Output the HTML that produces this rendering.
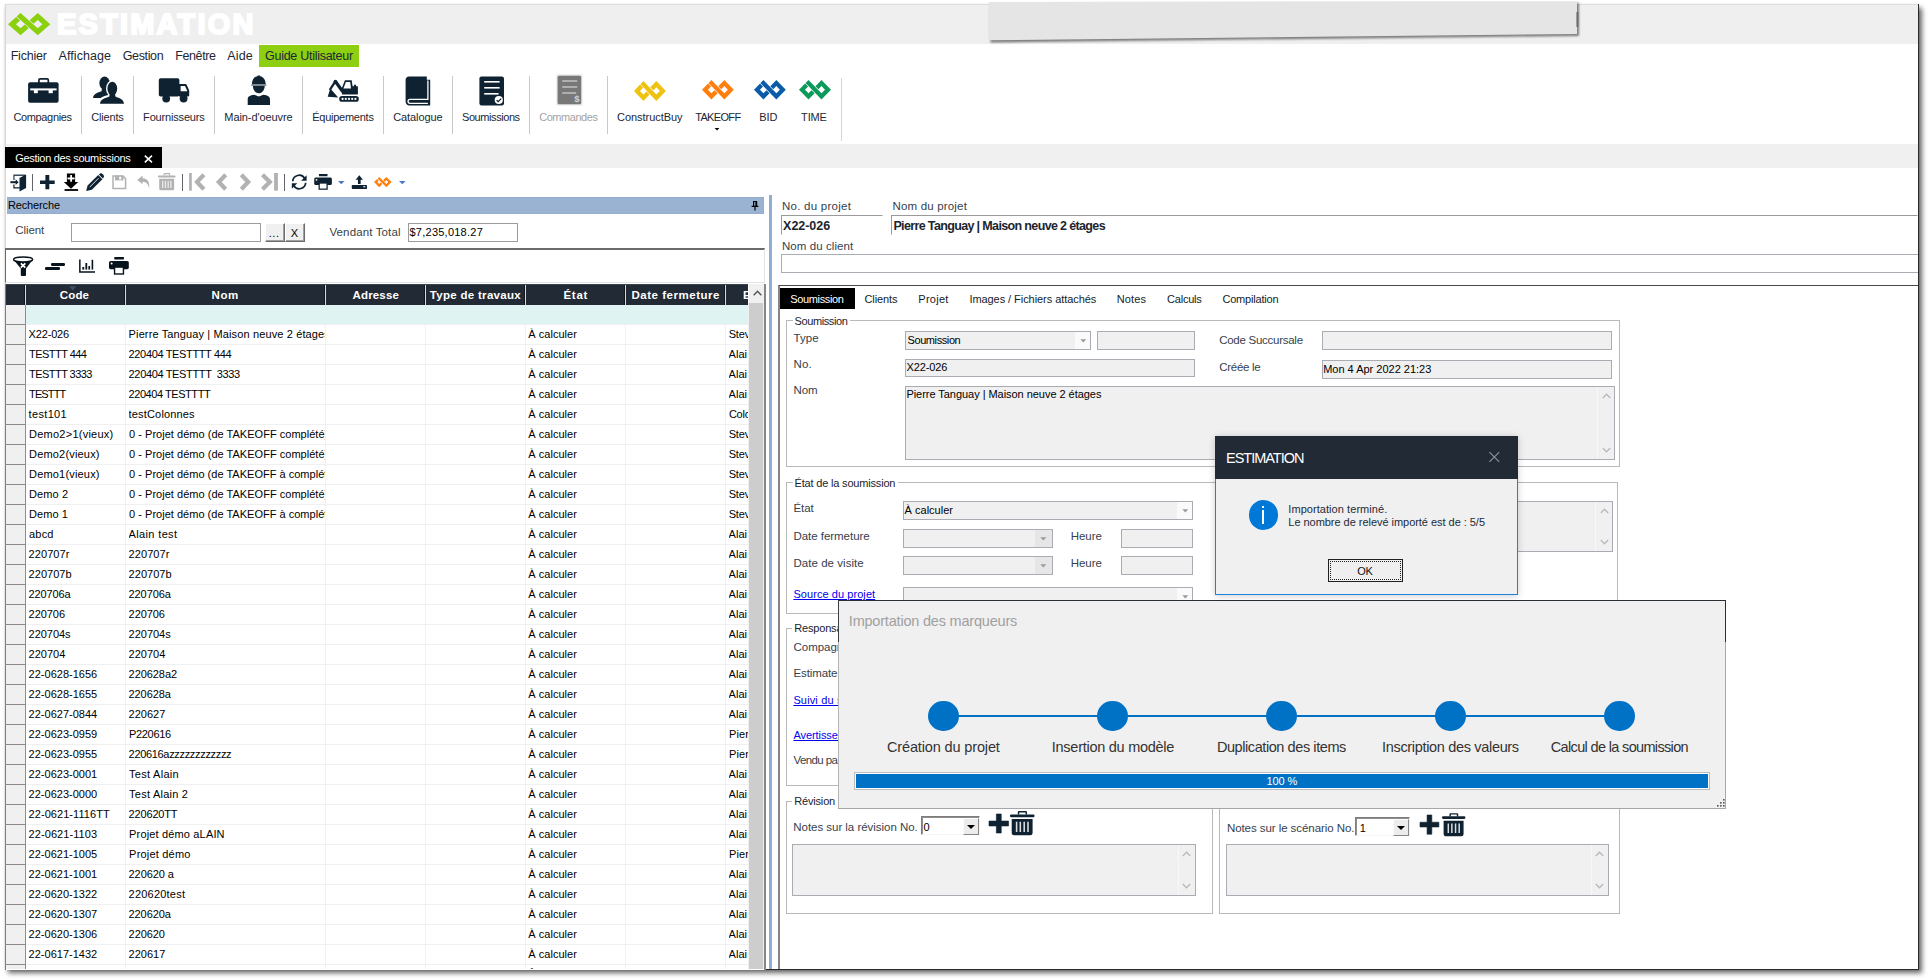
<!DOCTYPE html>
<html><head><meta charset="utf-8"><title>ESTIMATION</title>
<style>
html,body{margin:0;padding:0;background:#fff;}
body{width:1928px;height:979px;position:relative;overflow:hidden;font-family:"Liberation Sans",sans-serif;font-size:11px;color:#000;}
body div,body svg,.t{position:absolute;}
.t{white-space:pre;line-height:1;}
svg{overflow:visible;}
</style></head><body>
<div style="left:5px;top:4.5px;width:1914px;height:965px;background:#fff;box-shadow:3px 3px 5px 0 rgba(0,0,0,.6), 0 0 2px rgba(0,0,0,.12);"></div>
<div style="left:5px;top:4.5px;width:1914px;height:39.2px;background:#efefef;"></div>
<div style="left:5px;top:4.2px;width:1914px;height:0.8px;background:#dedede;"></div>
<div style="left:5px;top:144px;width:1914px;height:24px;background:#f0f0f0;"></div>
<div style="left:4.8px;top:4.5px;width:0.6px;height:965px;background:#d8d8d8;"></div>
<div style="left:1918px;top:4px;width:1px;height:965.5px;background:#2b2b2b;"></div>
<div style="left:5px;top:968.7px;width:1914px;height:1px;background:#2b2b2b;"></div>
<svg style="left:7.8px;top:13px;" width="42.3" height="22.3" viewBox="0 0 42.3 22.3"><path d="M8.59,3.52 L12.55,0.00 L25.12,11.15 L29.75,15.26 L34.38,11.15 L29.75,7.04 L25.57,10.75 L21.60,7.23 L29.75,0.00 L42.31,11.15 L29.75,22.30Z M8.13,3.92 L-0.01,11.15 L12.55,22.30 L20.70,15.07 L16.73,11.55 L12.55,15.26 L7.92,11.15 L12.10,7.44Z" fill="#8bd00c"/></svg>
<span class="t" style="left:57.10px;top:10.00px;font-size:29px;color:#fff;font-weight:bold;letter-spacing:2.181px;-webkit-text-stroke:2px #fff;">ESTIMATION</span>
<svg style="left:970px;top:0" width="640" height="56" viewBox="970 0 640 56"><defs><filter id="ss" x="-5%" y="-30%" width="110%" height="180%"><feGaussianBlur stdDeviation="1.1"/></filter></defs><polygon points="990,4 1579,3 1579,36 990.5,42.5" fill="#555" opacity=".75" filter="url(#ss)"/><polygon points="988.7,2 1577,1.2 1577,34 988.7,40.3" fill="#e5e5e5"/><rect x="1576.3" y="12" width="2.2" height="15" fill="#666" opacity=".8"/></svg>
<span class="t" style="left:10.70px;top:50.00px;font-size:12.5px;color:#1c2733;letter-spacing:-0.231px;">Fichier</span>
<span class="t" style="left:58.60px;top:50.00px;font-size:12.5px;color:#1c2733;letter-spacing:0.055px;">Affichage</span>
<span class="t" style="left:122.70px;top:50.00px;font-size:12.5px;color:#1c2733;letter-spacing:-0.356px;">Gestion</span>
<span class="t" style="left:175.30px;top:50.00px;font-size:12.5px;color:#1c2733;letter-spacing:-0.413px;">Fenêtre</span>
<span class="t" style="left:227.20px;top:50.00px;font-size:12.5px;color:#1c2733;letter-spacing:0.167px;">Aide</span>
<div style="left:258.9px;top:45.2px;width:99.9px;height:21.5px;background:#8ecf12;"></div>
<span class="t" style="left:265.00px;top:50.00px;font-size:12.5px;color:#1c2733;letter-spacing:-0.271px;">Guide Utilisateur</span>
<div style="left:81.1px;top:76px;width:1px;height:57.5px;background:#c9c9c9;"></div>
<div style="left:133px;top:76px;width:1px;height:57.5px;background:#c9c9c9;"></div>
<div style="left:213.7px;top:76px;width:1px;height:57.5px;background:#c9c9c9;"></div>
<div style="left:301.9px;top:76px;width:1px;height:57.5px;background:#c9c9c9;"></div>
<div style="left:382.8px;top:76px;width:1px;height:57.5px;background:#c9c9c9;"></div>
<div style="left:451.9px;top:76px;width:1px;height:57.5px;background:#c9c9c9;"></div>
<div style="left:529px;top:76px;width:1px;height:57.5px;background:#c9c9c9;"></div>
<div style="left:606.9px;top:75.8px;width:1px;height:58px;background:#c9c9c9;"></div>
<div style="left:840.9px;top:77.8px;width:1px;height:63.5px;background:#d5d5d5;"></div>
<span class="t" style="left:13.40px;top:112.00px;font-size:11px;color:#1c2733;letter-spacing:-0.347px;">Compagnies</span>
<span class="t" style="left:91.30px;top:112.00px;font-size:11px;color:#1c2733;letter-spacing:-0.175px;">Clients</span>
<span class="t" style="left:143.10px;top:112.00px;font-size:11px;color:#1c2733;letter-spacing:-0.173px;">Fournisseurs</span>
<span class="t" style="left:224.30px;top:112.00px;font-size:11px;color:#1c2733;letter-spacing:-0.081px;">Main-d&#x27;oeuvre</span>
<span class="t" style="left:312.20px;top:112.00px;font-size:11px;color:#1c2733;letter-spacing:-0.247px;">Équipements</span>
<span class="t" style="left:393.20px;top:112.00px;font-size:11px;color:#1c2733;letter-spacing:-0.095px;">Catalogue</span>
<span class="t" style="left:462.00px;top:112.00px;font-size:11px;color:#1c2733;letter-spacing:-0.424px;">Soumissions</span>
<span class="t" style="left:539.20px;top:112.00px;font-size:11px;color:#a3a3a3;letter-spacing:-0.451px;">Commandes</span>
<span class="t" style="left:617.00px;top:112.00px;font-size:11px;color:#1c2733;letter-spacing:-0.044px;">ConstructBuy</span>
<span class="t" style="left:695.20px;top:112.00px;font-size:11px;color:#1c2733;letter-spacing:-0.660px;">TAKEOFF</span>
<span class="t" style="left:759.30px;top:112.00px;font-size:11px;color:#1c2733;letter-spacing:-0.048px;">BID</span>
<span class="t" style="left:801.10px;top:112.00px;font-size:11px;color:#1c2733;letter-spacing:-0.145px;">TIME</span>
<svg style="left:714px;top:128px" width="6" height="3" viewBox="0 0 6 3"><path d="M0.6,0 L5.4,0 L3,2.6z" fill="#000"/></svg>
<svg style="left:633.7px;top:81px;" width="31.8" height="19.9" viewBox="0 0 31.8 19.9"><path d="M6.46,3.14 L9.44,0.00 L18.88,9.95 L22.36,13.62 L25.85,9.95 L22.36,6.28 L19.29,9.51 L16.31,6.37 L22.36,0.00 L31.81,9.95 L22.36,19.90Z M6.04,3.58 L-0.01,9.95 L9.44,19.90 L15.49,13.53 L12.51,10.39 L9.44,13.62 L5.95,9.95 L9.02,6.72Z" fill="#efc20f"/></svg>
<svg style="left:701.8px;top:80.2px;" width="31.8" height="19.4" viewBox="0 0 31.8 19.4"><path d="M6.46,3.06 L9.44,0.00 L18.88,9.70 L22.36,13.28 L25.85,9.70 L22.36,6.12 L19.30,9.27 L16.32,6.21 L22.36,0.00 L31.81,9.70 L22.36,19.40Z M6.04,3.49 L-0.01,9.70 L9.44,19.40 L15.48,13.19 L12.50,10.13 L9.44,13.28 L5.95,9.70 L9.02,6.55Z" fill="#ff7f0e"/></svg>
<svg style="left:753.7px;top:80.2px;" width="31.8" height="19.4" viewBox="0 0 31.8 19.4"><path d="M6.46,3.06 L9.44,0.00 L18.88,9.70 L22.36,13.28 L25.85,9.70 L22.36,6.12 L19.30,9.27 L16.32,6.21 L22.36,0.00 L31.81,9.70 L22.36,19.40Z M6.04,3.49 L-0.01,9.70 L9.44,19.40 L15.48,13.19 L12.50,10.13 L9.44,13.28 L5.95,9.70 L9.02,6.55Z" fill="#0b5ca8"/></svg>
<svg style="left:798.6px;top:80.2px;" width="32" height="19.4" viewBox="0 0 32 19.4"><path d="M6.50,3.06 L9.50,0.00 L19.00,9.70 L22.50,13.28 L26.01,9.70 L22.50,6.12 L19.42,9.27 L16.42,6.21 L22.50,0.00 L32.01,9.70 L22.50,19.40Z M6.08,3.49 L-0.01,9.70 L9.50,19.40 L15.58,13.19 L12.58,10.13 L9.50,13.28 L5.99,9.70 L9.08,6.55Z" fill="#0c9a5b"/></svg>
<svg style="left:28px;top:78px;" width="31" height="25" viewBox="0 0 31 25"><rect x="0.1" y="4.3" width="30.5" height="20.4" rx="2" fill="#0f2231"/><rect x="10.9" y="0.9" width="9.4" height="6" rx="1.2" fill="none" stroke="#0f2231" stroke-width="1.7"/><rect x="2.2" y="10.4" width="26.4" height="2" fill="#fff"/><rect x="5.9" y="12" width="3.9" height="3.2" fill="#fff"/><rect x="20.6" y="12" width="4.2" height="3.2" fill="#fff"/></svg>
<svg style="left:92px;top:76px;" width="33" height="29" viewBox="0 0 33 29"><ellipse cx="12.6" cy="7.2" rx="5.2" ry="6.6" fill="#0f2231"/><path d="M1,22 C1.5,17.5 6,16.5 9.5,15.2 L10,12 L16,12 L16.5,16 L20,22 Z" fill="#0f2231"/><ellipse cx="20.3" cy="12.6" rx="6.3" ry="8.1" fill="#fff"/><path d="M6.5,28.3 C7,22 13,21.5 17,19.8 L17.5,16 L23.5,16 L24,19.8 C28,21.5 32,22.3 32.8,28.3 Z" fill="#fff" stroke="#fff" stroke-width="2.4"/><ellipse cx="20.3" cy="12.6" rx="4.9" ry="6.8" fill="#0f2231"/><path d="M8,27.8 C8.6,23 13,22.4 17.3,20.6 L17.8,17 L22.9,17 L23.4,20.6 C27.5,22.4 31.3,23 32,27.8 Z" fill="#0f2231"/></svg>
<svg style="left:158px;top:78px;" width="32" height="25" viewBox="0 0 32 25"><rect x="0.8" y="0.2" width="20.6" height="18.3" rx="1.8" fill="#0f2231"/><path d="M21,6 L27.3,6 Q28.4,6 28.9,7.2 L31.2,12.6 L31.2,17.3 Q31.2,18.5 30,18.5 L21,18.5 Z" fill="#0f2231"/><path d="M22.6,7.9 L27,7.9 L29.4,13.3 L22.6,13.3 Z" fill="#fff"/><circle cx="8.2" cy="20.6" r="3.9" fill="#0f2231"/><circle cx="25.6" cy="20.6" r="3.9" fill="#0f2231"/></svg>
<svg style="left:247px;top:75px;" width="24" height="30" viewBox="247 75 24 30"><path d="M251.9,84.4 C251.9,79.5 254.6,76.6 257.4,76.2 L257.5,75.4 L260.1,75.4 L260.2,76.2 C263,76.6 265.7,79.5 265.7,84.4 Z" fill="#0f2231"/><rect x="251.3" y="84.2" width="15" height="1.8" fill="#7f8991"/><path d="M252.9,86 L264.7,86 C264.7,90 262,93.3 258.8,93.3 C255.6,93.3 252.9,90 252.9,86 Z" fill="#0f2231"/><path d="M247.7,104.9 L247.7,99.5 C247.7,96.5 250,95.3 254.2,94.7 L258.8,96.6 L263.4,94.7 C267.6,95.3 270,96.5 270,99.5 L270,104.9 Z" fill="#0f2231"/></svg>
<svg style="left:327px;top:79px;" width="33" height="24" viewBox="327 79 33 24"><rect x="339.2" y="96.1" width="19.6" height="5.7" rx="2.85" fill="#0f2231"/><circle cx="342.6" cy="98.95" r="1.1" fill="#fff"/><circle cx="345.8" cy="98.95" r="1.1" fill="#fff"/><circle cx="349" cy="98.95" r="1.1" fill="#fff"/><circle cx="352.2" cy="98.95" r="1.1" fill="#fff"/><circle cx="355.4" cy="98.95" r="1.1" fill="#fff"/><path d="M341.9,94.6 L341.9,88 L344.9,80.3 L351.7,80.3 L352.6,86.3 L353.9,86.3 L353.9,84.7 L356.1,84.7 L356.1,86.3 L357.9,86.3 L357.9,94.6 Z" fill="#0f2231"/><path d="M345.9,82 L350.2,82 L351,88.6 L343.4,88.6 Z" fill="#fff"/><path d="M342.8,91.8 L335.3,81.3" stroke="#0f2231" stroke-width="3.2" fill="none"/><path d="M335.3,81.3 L329.8,90" stroke="#0f2231" stroke-width="2.3" fill="none"/><circle cx="335.3" cy="81.5" r="1.75" fill="#0f2231"/><path d="M327.7,96.8 L330.3,88.6 L338.2,97.4 Z" fill="#0f2231"/></svg>
<svg style="left:405px;top:75.5px;" width="26" height="30" viewBox="0 0 26 30"><path d="M4,0.5 L21.8,0.5 L21.8,3.8 L25.2,3.8 L25.2,29.4 L4.6,29.4 C2,29.4 0.6,27.6 0.6,25.4 L0.6,4 C0.6,1.8 2,0.5 4,0.5 Z" fill="#0f2231"/><path d="M22.9,4.6 L22.9,23.4 L5,23.4 C2.4,23.4 2.4,27.3 5,27.3 L22.9,27.3" fill="none" stroke="#fff" stroke-width="1.3"/></svg>
<svg style="left:478.5px;top:75.6px;" width="26" height="30" viewBox="0 0 26 30"><rect x="0.4" y="0.4" width="24.6" height="29" rx="2.2" fill="#0f2231"/><rect x="5.2" y="5" width="15.4" height="1.6" fill="#fff"/><rect x="5.2" y="11" width="15.4" height="1.6" fill="#fff"/><rect x="5.2" y="17" width="14.4" height="1.6" fill="#fff"/><circle cx="19.8" cy="24" r="4.1" fill="#fff"/><path d="M17.6,24.2 L19.2,25.7 L22.2,22.6" fill="none" stroke="#0f2231" stroke-width="1.3"/></svg>
<svg style="left:555.8px;top:74.2px;" width="27" height="32" viewBox="0 0 27 32"><rect x="0.4" y="0.4" width="26" height="31" fill="#e4e4e4"/><rect x="1.6" y="1.7" width="23.6" height="28.6" rx="1.6" fill="#787878"/><rect x="6.2" y="6.2" width="15" height="1.6" fill="#bdbdbd"/><rect x="6.2" y="12.2" width="15" height="1.6" fill="#bdbdbd"/><rect x="6.2" y="18.2" width="14" height="1.6" fill="#bdbdbd"/><text x="18.3" y="28.4" font-family="Liberation Sans" font-size="9.5" font-weight="bold" fill="#d4d4d4">$</text></svg>
<div style="left:5px;top:147.2px;width:157px;height:20.8px;background:#000;"></div>
<span class="t" style="left:15.20px;top:153.00px;font-size:11px;color:#fff;letter-spacing:-0.304px;">Gestion des soumissions</span>
<svg style="left:144px;top:154.5px" width="9" height="8" viewBox="0 0 9 8"><path d="M0.8,0.6 L8,7.4 M8,0.6 L0.8,7.4" stroke="#fff" stroke-width="1.5" fill="none"/></svg>
<svg style="left:9.5px;top:173.5px;" width="17" height="18" viewBox="9.5 173.5 17 18"><path d="M13.45,179.6 L13.45,174.75 L25.2,174.75" fill="none" stroke="#3b4b59" stroke-width="1.3"/><path d="M13.45,184 L13.45,187.35 L19.4,187.35" fill="none" stroke="#0f2231" stroke-width="1.2"/><path d="M19,177.6 L24.5,174.6 L25.6,174.6 L25.6,187.4 L19,191 Z" fill="#0f2231"/><rect x="9.9" y="180.7" width="5.8" height="2" fill="#0f2231"/><path d="M15.2,178.8 L18.1,181.7 L15.2,184.5 Z" fill="#0f2231"/></svg>
<div style="left:31.9px;top:174px;width:1.1px;height:17px;background:#64646c;"></div>
<svg style="left:39.9px;top:175px;" width="14.7" height="14.2" viewBox="0 0 14.7 14.2"><path d="M5.4,0 h3.9 v5.4 h5.4 v3.5 h-5.4 v5.3 h-3.9 v-5.3 h-5.4 v-3.5 h5.4z" fill="#0f2231"/></svg>
<svg style="left:63px;top:173px;" width="16" height="18.5" viewBox="63 173 16 18.5"><rect x="66.9" y="173.5" width="8.2" height="9" fill="#000"/><path d="M63.8,182 L78.2,182 L71,188.7 Z" fill="#000"/><rect x="64.6" y="189.1" width="13.5" height="1.8" fill="#000"/><rect x="70.2" y="175" width="1.8" height="6.7" fill="#fff"/><rect x="67.5" y="177.5" width="7.1" height="1.9" fill="#fff"/></svg>
<svg style="left:86px;top:172.7px;" width="18.4" height="18.2" viewBox="0 0 18.4 18.2"><path d="M0.2,18 L1.6,12.6 L12.2,2 L16.4,6.2 L5.8,16.7 Z" fill="#0f2231"/><path d="M13.2,1.2 Q15,-0.6 16.8,1.2 L17.2,1.6 Q19,3.4 17.2,5.2 L16.9,5.5 L12.9,1.5 Z" fill="#0f2231"/><path d="M3.6,14.2 L12.6,5.2" stroke="#fff" stroke-width="1" opacity=".85"/></svg>
<svg style="left:112px;top:175px;" width="15" height="14.5" viewBox="0 0 15 14.5"><path d="M1,1 L10.8,1 L13.6,3.6 L13.6,13.4 L1,13.4 Z" fill="none" stroke="#b2b2b2" stroke-width="1.5"/><rect x="3" y="0.6" width="8.5" height="4.8" fill="#b2b2b2"/><rect x="7.2" y="1.8" width="2" height="2.7" fill="#fff"/></svg>
<svg style="left:137px;top:175px;" width="13.5" height="14" viewBox="0 0 13.5 14"><path d="M0.3,4.9 L5.6,0.5 L5.6,3.3 C10.5,3.3 12.8,6.6 12.2,13.6 C11.3,9.2 9.5,6.9 5.6,6.7 L5.6,9.3 Z" fill="#b2b2b2"/></svg>
<svg style="left:158px;top:172.9px;" width="17.5" height="17.4" viewBox="0 0 24.5 24.3"><path d="M8.9,0.1 h7 q1.1,0 1.1,1.1 v2.3 h-1.5 v-1.9 h-6.2 v1.9 h-1.5 v-2.3 q0,-1.1 1.1,-1.1z" fill="#b2b2b2"/><rect x="0" y="3.4" width="24.5" height="2.8" rx="1.2" fill="#b2b2b2"/><path d="M1.7,8 h20.9 v14 q0,2.3 -2.3,2.3 h-16.3 q-2.3,0 -2.3,-2.3z" fill="#b2b2b2"/><path d="M6.6,10.8 v10.1 M10.3,10.8 v10.1 M14.2,10.8 v10.1 M18,10.8 v10.1" stroke="#fff" stroke-width="1.55" opacity=".85"/></svg>
<div style="left:181.8px;top:174px;width:1.1px;height:17px;background:#64646c;"></div>
<svg style="left:189px;top:173.2px;" width="18" height="18" viewBox="0 0 18 18"><path d="M14.9,1.7 L8,8.95 L14.9,16.2" fill="none" stroke="#b2b2b2" stroke-width="4.2" stroke-linejoin="miter"/><rect x="0.1" y="0" width="2.7" height="17.7" fill="#b2b2b2"/></svg>
<svg style="left:214px;top:173.2px;" width="18" height="18" viewBox="0 0 18 18"><path d="M11.7,1.7 L4.8,8.95 L11.7,16.2" fill="none" stroke="#b2b2b2" stroke-width="4.2" stroke-linejoin="miter"/></svg>
<svg style="left:238px;top:173.2px;" width="18" height="18" viewBox="0 0 18 18"><path d="M3.3,1.7 L10.2,8.95 L3.3,16.2" fill="none" stroke="#b2b2b2" stroke-width="4.2" stroke-linejoin="miter"/></svg>
<svg style="left:260px;top:173.2px;" width="18" height="18" viewBox="0 0 18 18"><path d="M2.5,1.7 L9.8,8.95 L2.5,16.2" fill="none" stroke="#b2b2b2" stroke-width="4.2" stroke-linejoin="miter"/><rect x="14.1" y="0" width="3.8" height="17.7" fill="#b2b2b2"/></svg>
<div style="left:283.9px;top:174px;width:1.1px;height:17px;background:#64646c;"></div>
<svg style="left:291px;top:174px;" width="17" height="16" viewBox="291 174 17 16"><path d="M292.7,181.3 A6.5,6.5 0 0 1 304.6,178.2" fill="none" stroke="#0f2231" stroke-width="1.7"/><path d="M305.7,182.7 A6.5,6.5 0 0 1 293.8,185.8" fill="none" stroke="#0f2231" stroke-width="1.7"/><path d="M306.6,175.2 L306.6,180.7 L301.1,180.7 Z" fill="#0f2231"/><path d="M291.8,188.8 L291.8,183.3 L297.3,183.3 Z" fill="#0f2231"/></svg>
<svg style="left:313.9px;top:174px;" width="18.1" height="15.8" viewBox="0 0 19.8 17.7"><rect x="5.3" y="0" width="9.6" height="2.5" fill="#0f2231"/><rect x="0" y="3.9" width="19.8" height="8.4" rx="1.7" fill="#0f2231"/><rect x="5.55" y="10.1" width="8.9" height="6.9" fill="#fff" stroke="#0f2231" stroke-width="1.4"/><circle cx="2.6" cy="6.5" r="1" fill="#fff"/></svg>
<svg style="left:338.3px;top:180.9px" width="7" height="4" viewBox="0 0 7 4"><path d="M0,0 L6.6,0 L3.3,3.3z" fill="#4a78c5"/></svg>
<svg style="left:351px;top:175px;" width="17" height="14.5" viewBox="351 175 17 14.5"><path d="M359.3,175.3 L363,179.7 L360.65,179.7 L360.65,183.9 L357.95,183.9 L357.95,179.7 L355.6,179.7 Z" fill="#0f2231"/><rect x="351.8" y="184.9" width="15.2" height="4" rx="0.7" fill="#0f2231"/><rect x="363.3" y="186.2" width="2" height="1.1" fill="#fff"/></svg>
<svg style="left:374.1px;top:176.9px;" width="17.6" height="10.2" viewBox="0 0 17.6 10.2"><path d="M3.57,1.61 L5.22,0.00 L10.45,5.10 L12.38,6.98 L14.30,5.10 L12.38,3.22 L10.88,4.68 L9.23,3.07 L12.38,0.00 L17.60,5.10 L12.38,10.20Z M3.14,2.03 L-0.00,5.10 L5.22,10.20 L8.37,7.13 L6.72,5.52 L5.22,6.98 L3.30,5.10 L4.79,3.64Z" fill="#ff7f0e"/></svg>
<svg style="left:398.8px;top:180.9px" width="7" height="4" viewBox="0 0 7 4"><path d="M0,0 L6.6,0 L3.3,3.3z" fill="#4a78c5"/></svg>
<div style="left:6.9px;top:197px;width:756.8px;height:16.7px;background:#9ab3d3;box-sizing:border-box;border:1px solid #93aed0;border-left:none;"></div>
<span class="t" style="left:7.90px;top:200.00px;font-size:11px;color:#000;letter-spacing:-0.123px;">Recherche</span>
<svg style="left:751px;top:200.5px" width="8" height="10" viewBox="0 0 8 10"><path d="M2,0.5 h4 M2.6,0.5 v4.6 M5.6,0.5 v4.6 M0.6,5.3 h6.8 M4,5.3 v4.2" stroke="#000" stroke-width="1.2" fill="none"/><rect x="4.4" y="0.5" width="1.3" height="4.6" fill="#000"/></svg>
<span class="t" style="left:15.30px;top:225.00px;font-size:11.5px;color:#3a3f45;letter-spacing:-0.084px;">Client</span>
<div style="left:71px;top:223px;width:189.8px;height:18.8px;background:#fff;border:1px solid #9c9c9c;box-sizing:border-box;"></div>
<div style="left:265px;top:223px;width:19.5px;height:19px;background:#f0f0f0;box-sizing:border-box;border:1px solid;border-color:#fff #6d6d6d #6d6d6d #fff;box-shadow:inset -1px -1px 0 #a0a0a0;"></div>
<div style="left:285px;top:223px;width:20px;height:19px;background:#f0f0f0;box-sizing:border-box;border:1px solid;border-color:#fff #6d6d6d #6d6d6d #fff;box-shadow:inset -1px -1px 0 #a0a0a0;"></div>
<span class="t" style="left:268.70px;top:228.00px;font-size:11px;color:#000;letter-spacing:0.609px;">...</span>
<span class="t" style="left:290.80px;top:228.00px;font-size:11px;color:#000;letter-spacing:-0.144px;">X</span>
<span class="t" style="left:329.40px;top:227.00px;font-size:11.5px;color:#3a3f45;letter-spacing:0.138px;">Vendant Total</span>
<div style="left:407.8px;top:223px;width:110px;height:18.6px;background:#fff;border:1px solid #9c9c9c;box-sizing:border-box;"></div>
<span class="t" style="left:409.50px;top:227.00px;font-size:11px;color:#000;letter-spacing:0.242px;">$7,235,018.27</span>
<div style="left:5.3px;top:248px;width:759.5px;height:35.3px;background:#fff;box-sizing:border-box;border:1px solid;border-color:#6b6b6b #e3e3e3 #e3e3e3 #6b6b6b;border-top-width:2px;"></div>
<svg style="left:12px;top:255px;" width="22" height="22" viewBox="0 0 22 22"><path d="M1.4,4.6 L8.8,13.4 L8.8,20 Q8.8,20.9 9.7,20.9 L13.1,20.9 Q14,20.9 14,20 L14,13.4 L20.8,4.6 Z" fill="#07131d"/><ellipse cx="11.1" cy="4.4" rx="9.5" ry="2.5" fill="#fff" stroke="#07131d" stroke-width="1.5"/><path d="M8.9,8.3 L13.3,12.7 M13.3,8.3 L8.9,12.7" stroke="#fff" stroke-width="1.7"/></svg>
<div style="left:50.9px;top:262.5px;width:14.2px;height:3.1px;background:#07131d;border-radius:1.2px;"></div>
<div style="left:44.9px;top:267.3px;width:14.9px;height:3.2px;background:#07131d;border-radius:1.2px;"></div>
<svg style="left:79px;top:259px;" width="17" height="14" viewBox="0 0 17 14"><path d="M0.85,0.4 L0.85,12.95 L16,12.95" fill="none" stroke="#07131d" stroke-width="1.5"/><rect x="3.3" y="8" width="1.9" height="2.6" fill="#07131d"/><rect x="6.4" y="4" width="1.8" height="6.6" fill="#07131d"/><rect x="9.4" y="7" width="1.7" height="3.6" fill="#07131d"/><rect x="12.6" y="0.8" width="1.6" height="9.8" fill="#07131d"/></svg>
<svg style="left:109px;top:257.3px;" width="19.8" height="17.7" viewBox="0 0 19.8 17.7"><rect x="5.3" y="0" width="9.6" height="2.5" fill="#07131d"/><rect x="0" y="3.9" width="19.8" height="8.4" rx="1.7" fill="#07131d"/><rect x="5.55" y="10.1" width="8.9" height="6.9" fill="#fff" stroke="#07131d" stroke-width="1.4"/><circle cx="2.6" cy="6.5" r="1" fill="#fff"/></svg>
<div style="left:5.1px;top:283.6px;width:760px;height:686px;background:#fff;"></div>
<div style="left:5.1px;top:283.6px;width:743px;height:21.5px;background:#222a35;"></div>
<div style="left:5.1px;top:283.6px;width:743px;height:0.8px;background:#3a4350;"></div>
<div style="left:25px;top:284.6px;width:1.1px;height:20px;background:#d9d9d9;"></div>
<div style="left:24.1px;top:284.6px;width:0.9px;height:20px;background:#10151c;"></div>
<div style="left:125px;top:284.6px;width:1.1px;height:20px;background:#d9d9d9;"></div>
<div style="left:124.1px;top:284.6px;width:0.9px;height:20px;background:#10151c;"></div>
<div style="left:325px;top:284.6px;width:1.1px;height:20px;background:#d9d9d9;"></div>
<div style="left:324.1px;top:284.6px;width:0.9px;height:20px;background:#10151c;"></div>
<div style="left:425px;top:284.6px;width:1.1px;height:20px;background:#d9d9d9;"></div>
<div style="left:424.1px;top:284.6px;width:0.9px;height:20px;background:#10151c;"></div>
<div style="left:525px;top:284.6px;width:1.1px;height:20px;background:#d9d9d9;"></div>
<div style="left:524.1px;top:284.6px;width:0.9px;height:20px;background:#10151c;"></div>
<div style="left:625px;top:284.6px;width:1.1px;height:20px;background:#d9d9d9;"></div>
<div style="left:624.1px;top:284.6px;width:0.9px;height:20px;background:#10151c;"></div>
<div style="left:725px;top:284.6px;width:1.1px;height:20px;background:#d9d9d9;"></div>
<div style="left:724.1px;top:284.6px;width:0.9px;height:20px;background:#10151c;"></div>
<span class="t" style="left:59.80px;top:290.00px;font-size:11.5px;color:#fff;font-weight:bold;letter-spacing:0.137px;">Code</span>
<span class="t" style="left:211.50px;top:290.00px;font-size:11.5px;color:#fff;font-weight:bold;letter-spacing:0.579px;">Nom</span>
<span class="t" style="left:352.50px;top:290.00px;font-size:11.5px;color:#fff;font-weight:bold;letter-spacing:0.158px;">Adresse</span>
<span class="t" style="left:429.80px;top:290.00px;font-size:11.5px;color:#fff;font-weight:bold;letter-spacing:0.299px;">Type de travaux</span>
<span class="t" style="left:563.50px;top:290.00px;font-size:11.5px;color:#fff;font-weight:bold;letter-spacing:0.691px;">État</span>
<span class="t" style="left:631.50px;top:290.00px;font-size:11.5px;color:#fff;font-weight:bold;letter-spacing:0.523px;">Date fermeture</span>
<span class="t" style="left:743.00px;top:290.00px;font-size:11.5px;color:#fff;font-weight:bold;width:5.5px;overflow:hidden;">E</span>
<svg style="left:68.5px;top:285.6px" width="8" height="5" viewBox="0 0 8 5"><path d="M0,0.3 L7.4,0.3 L3.7,4.4z" fill="#3d4f60"/></svg>
<div style="left:26px;top:305px;width:722.5px;height:19.3px;background:#dff4f2;"></div>
<div style="left:5.1px;top:305px;width:19.6px;height:664px;background:#f0f0f0;"></div>
<div style="left:25px;top:305px;width:1px;height:664px;background:#8d8d8d;"></div>
<div style="left:5.3px;top:283.6px;width:1px;height:686px;background:#7b7b7b;"></div>
<div style="left:125px;top:324.5px;width:1px;height:644.5px;background:#f1f1f1;"></div>
<div style="left:325px;top:324.5px;width:1px;height:644.5px;background:#f1f1f1;"></div>
<div style="left:425px;top:324.5px;width:1px;height:644.5px;background:#f1f1f1;"></div>
<div style="left:525px;top:324.5px;width:1px;height:644.5px;background:#f1f1f1;"></div>
<div style="left:625px;top:324.5px;width:1px;height:644.5px;background:#f1f1f1;"></div>
<div style="left:725px;top:324.5px;width:1px;height:644.5px;background:#f1f1f1;"></div>
<div style="left:5.1px;top:324px;width:19.6px;height:1.1px;background:#8a8a8a;"></div>
<div style="left:26px;top:324.2px;width:722.5px;height:1px;background:#f0f0f0;"></div>
<span class="t" style="left:28.60px;top:329.00px;font-size:11px;color:#000;letter-spacing:-0.171px;">X22-026</span>
<span class="t" style="left:128.60px;top:329.00px;font-size:11px;color:#000;letter-spacing:0.127px;width:196.1px;overflow:hidden;">Pierre Tanguay | Maison neuve 2 étages</span>
<span class="t" style="left:528.20px;top:329.00px;font-size:11px;color:#000;letter-spacing:0.050px;">À calculer</span>
<span class="t" style="left:728.70px;top:329.00px;font-size:11px;color:#000;letter-spacing:-0.179px;width:19.6px;overflow:hidden;">Stev</span>
<div style="left:5.1px;top:344px;width:19.6px;height:1.1px;background:#8a8a8a;"></div>
<div style="left:26px;top:344.2px;width:722.5px;height:1px;background:#f0f0f0;"></div>
<span class="t" style="left:29.10px;top:349.00px;font-size:11px;color:#000;letter-spacing:-0.547px;">TESTTT 444</span>
<span class="t" style="left:128.60px;top:349.00px;font-size:11px;color:#000;letter-spacing:-0.353px;width:196.1px;overflow:hidden;">220404 TESTTTT 444</span>
<span class="t" style="left:528.20px;top:349.00px;font-size:11px;color:#000;letter-spacing:0.050px;">À calculer</span>
<span class="t" style="left:728.50px;top:349.00px;font-size:11px;color:#000;letter-spacing:0.064px;width:19.8px;overflow:hidden;">Alai</span>
<div style="left:5.1px;top:364px;width:19.6px;height:1.1px;background:#8a8a8a;"></div>
<div style="left:26px;top:364.2px;width:722.5px;height:1px;background:#f0f0f0;"></div>
<span class="t" style="left:29.10px;top:369.00px;font-size:11px;color:#000;letter-spacing:-0.554px;">TESTTT 3333</span>
<span class="t" style="left:128.60px;top:369.00px;font-size:11px;color:#000;letter-spacing:-0.346px;width:196.1px;overflow:hidden;">220404 TESTTTT  3333</span>
<span class="t" style="left:528.20px;top:369.00px;font-size:11px;color:#000;letter-spacing:0.050px;">À calculer</span>
<span class="t" style="left:728.50px;top:369.00px;font-size:11px;color:#000;letter-spacing:0.064px;width:19.8px;overflow:hidden;">Alai</span>
<div style="left:5.1px;top:384px;width:19.6px;height:1.1px;background:#8a8a8a;"></div>
<div style="left:26px;top:384.2px;width:722.5px;height:1px;background:#f0f0f0;"></div>
<span class="t" style="left:29.10px;top:389.00px;font-size:11px;color:#000;letter-spacing:-0.894px;">TESTTT</span>
<span class="t" style="left:128.60px;top:389.00px;font-size:11px;color:#000;letter-spacing:-0.446px;width:196.1px;overflow:hidden;">220404 TESTTTT</span>
<span class="t" style="left:528.20px;top:389.00px;font-size:11px;color:#000;letter-spacing:0.050px;">À calculer</span>
<span class="t" style="left:728.50px;top:389.00px;font-size:11px;color:#000;letter-spacing:0.064px;width:19.8px;overflow:hidden;">Alai</span>
<div style="left:5.1px;top:404px;width:19.6px;height:1.1px;background:#8a8a8a;"></div>
<div style="left:26px;top:404.2px;width:722.5px;height:1px;background:#f0f0f0;"></div>
<span class="t" style="left:28.60px;top:409.00px;font-size:11px;color:#000;letter-spacing:0.329px;">test101</span>
<span class="t" style="left:128.60px;top:409.00px;font-size:11px;color:#000;letter-spacing:0.165px;width:196.1px;overflow:hidden;">testColonnes</span>
<span class="t" style="left:528.20px;top:409.00px;font-size:11px;color:#000;letter-spacing:0.050px;">À calculer</span>
<span class="t" style="left:728.90px;top:409.00px;font-size:11px;color:#000;letter-spacing:-0.256px;width:19.4px;overflow:hidden;">Colo</span>
<div style="left:5.1px;top:424px;width:19.6px;height:1.1px;background:#8a8a8a;"></div>
<div style="left:26px;top:424.2px;width:722.5px;height:1px;background:#f0f0f0;"></div>
<span class="t" style="left:29.00px;top:429.00px;font-size:11px;color:#000;letter-spacing:0.249px;">Demo2&gt;1(vieux)</span>
<span class="t" style="left:129.10px;top:429.00px;font-size:11px;color:#000;letter-spacing:0.023px;width:195.6px;overflow:hidden;">0 - Projet démo (de TAKEOFF complété)</span>
<span class="t" style="left:528.20px;top:429.00px;font-size:11px;color:#000;letter-spacing:0.050px;">À calculer</span>
<span class="t" style="left:728.70px;top:429.00px;font-size:11px;color:#000;letter-spacing:-0.179px;width:19.6px;overflow:hidden;">Stev</span>
<div style="left:5.1px;top:444px;width:19.6px;height:1.1px;background:#8a8a8a;"></div>
<div style="left:26px;top:444.2px;width:722.5px;height:1px;background:#f0f0f0;"></div>
<span class="t" style="left:29.00px;top:449.00px;font-size:11px;color:#000;letter-spacing:0.186px;">Demo2(vieux)</span>
<span class="t" style="left:129.10px;top:449.00px;font-size:11px;color:#000;letter-spacing:0.023px;width:195.6px;overflow:hidden;">0 - Projet démo (de TAKEOFF complété)</span>
<span class="t" style="left:528.20px;top:449.00px;font-size:11px;color:#000;letter-spacing:0.050px;">À calculer</span>
<span class="t" style="left:728.70px;top:449.00px;font-size:11px;color:#000;letter-spacing:-0.179px;width:19.6px;overflow:hidden;">Stev</span>
<div style="left:5.1px;top:464px;width:19.6px;height:1.1px;background:#8a8a8a;"></div>
<div style="left:26px;top:464.2px;width:722.5px;height:1px;background:#f0f0f0;"></div>
<span class="t" style="left:29.00px;top:469.00px;font-size:11px;color:#000;letter-spacing:0.186px;">Demo1(vieux)</span>
<span class="t" style="left:129.10px;top:469.00px;font-size:11px;color:#000;letter-spacing:0.016px;width:195.6px;overflow:hidden;">0 - Projet démo (de TAKEOFF à compléter)</span>
<span class="t" style="left:528.20px;top:469.00px;font-size:11px;color:#000;letter-spacing:0.050px;">À calculer</span>
<span class="t" style="left:728.70px;top:469.00px;font-size:11px;color:#000;letter-spacing:-0.179px;width:19.6px;overflow:hidden;">Stev</span>
<div style="left:5.1px;top:484px;width:19.6px;height:1.1px;background:#8a8a8a;"></div>
<div style="left:26px;top:484.2px;width:722.5px;height:1px;background:#f0f0f0;"></div>
<span class="t" style="left:29.00px;top:489.00px;font-size:11px;color:#000;letter-spacing:0.128px;">Demo 2</span>
<span class="t" style="left:129.10px;top:489.00px;font-size:11px;color:#000;letter-spacing:0.023px;width:195.6px;overflow:hidden;">0 - Projet démo (de TAKEOFF complété)</span>
<span class="t" style="left:528.20px;top:489.00px;font-size:11px;color:#000;letter-spacing:0.050px;">À calculer</span>
<span class="t" style="left:728.70px;top:489.00px;font-size:11px;color:#000;letter-spacing:-0.179px;width:19.6px;overflow:hidden;">Stev</span>
<div style="left:5.1px;top:504px;width:19.6px;height:1.1px;background:#8a8a8a;"></div>
<div style="left:26px;top:504.2px;width:722.5px;height:1px;background:#f0f0f0;"></div>
<span class="t" style="left:29.00px;top:509.00px;font-size:11px;color:#000;letter-spacing:0.078px;">Demo 1</span>
<span class="t" style="left:129.10px;top:509.00px;font-size:11px;color:#000;letter-spacing:0.016px;width:195.6px;overflow:hidden;">0 - Projet démo (de TAKEOFF à compléter)</span>
<span class="t" style="left:528.20px;top:509.00px;font-size:11px;color:#000;letter-spacing:0.050px;">À calculer</span>
<span class="t" style="left:728.70px;top:509.00px;font-size:11px;color:#000;letter-spacing:-0.179px;width:19.6px;overflow:hidden;">Stev</span>
<div style="left:5.1px;top:524px;width:19.6px;height:1.1px;background:#8a8a8a;"></div>
<div style="left:26px;top:524.2px;width:722.5px;height:1px;background:#f0f0f0;"></div>
<span class="t" style="left:29.00px;top:529.00px;font-size:11px;color:#000;letter-spacing:0.210px;">abcd</span>
<span class="t" style="left:128.60px;top:529.00px;font-size:11px;color:#000;letter-spacing:0.355px;width:196.1px;overflow:hidden;">Alain test</span>
<span class="t" style="left:528.20px;top:529.00px;font-size:11px;color:#000;letter-spacing:0.050px;">À calculer</span>
<span class="t" style="left:728.50px;top:529.00px;font-size:11px;color:#000;letter-spacing:0.064px;width:19.8px;overflow:hidden;">Alai</span>
<div style="left:5.1px;top:544px;width:19.6px;height:1.1px;background:#8a8a8a;"></div>
<div style="left:26px;top:544.2px;width:722.5px;height:1px;background:#f0f0f0;"></div>
<span class="t" style="left:28.60px;top:549.00px;font-size:11px;color:#000;letter-spacing:0.075px;">220707r</span>
<span class="t" style="left:128.60px;top:549.00px;font-size:11px;color:#000;letter-spacing:0.061px;width:196.1px;overflow:hidden;">220707r</span>
<span class="t" style="left:528.20px;top:549.00px;font-size:11px;color:#000;letter-spacing:0.050px;">À calculer</span>
<span class="t" style="left:728.50px;top:549.00px;font-size:11px;color:#000;letter-spacing:0.064px;width:19.8px;overflow:hidden;">Alai</span>
<div style="left:5.1px;top:564px;width:19.6px;height:1.1px;background:#8a8a8a;"></div>
<div style="left:26px;top:564.2px;width:722.5px;height:1px;background:#f0f0f0;"></div>
<span class="t" style="left:28.60px;top:569.00px;font-size:11px;color:#000;letter-spacing:0.025px;">220707b</span>
<span class="t" style="left:128.60px;top:569.00px;font-size:11px;color:#000;letter-spacing:0.025px;width:196.1px;overflow:hidden;">220707b</span>
<span class="t" style="left:528.20px;top:569.00px;font-size:11px;color:#000;letter-spacing:0.050px;">À calculer</span>
<span class="t" style="left:728.50px;top:569.00px;font-size:11px;color:#000;letter-spacing:0.064px;width:19.8px;overflow:hidden;">Alai</span>
<div style="left:5.1px;top:584px;width:19.6px;height:1.1px;background:#8a8a8a;"></div>
<div style="left:26px;top:584.2px;width:722.5px;height:1px;background:#f0f0f0;"></div>
<span class="t" style="left:28.60px;top:589.00px;font-size:11px;color:#000;letter-spacing:-0.118px;">220706a</span>
<span class="t" style="left:128.60px;top:589.00px;font-size:11px;color:#000;letter-spacing:-0.104px;width:196.1px;overflow:hidden;">220706a</span>
<span class="t" style="left:528.20px;top:589.00px;font-size:11px;color:#000;letter-spacing:0.050px;">À calculer</span>
<span class="t" style="left:728.50px;top:589.00px;font-size:11px;color:#000;letter-spacing:0.064px;width:19.8px;overflow:hidden;">Alai</span>
<div style="left:5.1px;top:604px;width:19.6px;height:1.1px;background:#8a8a8a;"></div>
<div style="left:26px;top:604.2px;width:722.5px;height:1px;background:#f0f0f0;"></div>
<span class="t" style="left:28.60px;top:609.00px;font-size:11px;color:#000;letter-spacing:-0.053px;">220706</span>
<span class="t" style="left:128.60px;top:609.00px;font-size:11px;color:#000;letter-spacing:-0.070px;width:196.1px;overflow:hidden;">220706</span>
<span class="t" style="left:528.20px;top:609.00px;font-size:11px;color:#000;letter-spacing:0.050px;">À calculer</span>
<span class="t" style="left:728.50px;top:609.00px;font-size:11px;color:#000;letter-spacing:0.064px;width:19.8px;overflow:hidden;">Alai</span>
<div style="left:5.1px;top:624px;width:19.6px;height:1.1px;background:#8a8a8a;"></div>
<div style="left:26px;top:624.2px;width:722.5px;height:1px;background:#f0f0f0;"></div>
<span class="t" style="left:28.60px;top:629.00px;font-size:11px;color:#000;letter-spacing:-0.031px;">220704s</span>
<span class="t" style="left:128.60px;top:629.00px;font-size:11px;color:#000;letter-spacing:-0.017px;width:196.1px;overflow:hidden;">220704s</span>
<span class="t" style="left:528.20px;top:629.00px;font-size:11px;color:#000;letter-spacing:0.050px;">À calculer</span>
<span class="t" style="left:728.50px;top:629.00px;font-size:11px;color:#000;letter-spacing:0.064px;width:19.8px;overflow:hidden;">Alai</span>
<div style="left:5.1px;top:644px;width:19.6px;height:1.1px;background:#8a8a8a;"></div>
<div style="left:26px;top:644.2px;width:722.5px;height:1px;background:#f0f0f0;"></div>
<span class="t" style="left:28.60px;top:649.00px;font-size:11px;color:#000;">220704</span>
<span class="t" style="left:128.60px;top:649.00px;font-size:11px;color:#000;letter-spacing:0.014px;width:196.1px;overflow:hidden;">220704</span>
<span class="t" style="left:528.20px;top:649.00px;font-size:11px;color:#000;letter-spacing:0.050px;">À calculer</span>
<span class="t" style="left:728.50px;top:649.00px;font-size:11px;color:#000;letter-spacing:0.064px;width:19.8px;overflow:hidden;">Alai</span>
<div style="left:5.1px;top:664px;width:19.6px;height:1.1px;background:#8a8a8a;"></div>
<div style="left:26px;top:664.2px;width:722.5px;height:1px;background:#f0f0f0;"></div>
<span class="t" style="left:28.60px;top:669.00px;font-size:11px;color:#000;letter-spacing:0.007px;">22-0628-1656</span>
<span class="t" style="left:128.60px;top:669.00px;font-size:11px;color:#000;letter-spacing:-0.069px;width:196.1px;overflow:hidden;">220628a2</span>
<span class="t" style="left:528.20px;top:669.00px;font-size:11px;color:#000;letter-spacing:0.050px;">À calculer</span>
<span class="t" style="left:728.50px;top:669.00px;font-size:11px;color:#000;letter-spacing:0.064px;width:19.8px;overflow:hidden;">Alai</span>
<div style="left:5.1px;top:684px;width:19.6px;height:1.1px;background:#8a8a8a;"></div>
<div style="left:26px;top:684.2px;width:722.5px;height:1px;background:#f0f0f0;"></div>
<span class="t" style="left:28.60px;top:689.00px;font-size:11px;color:#000;letter-spacing:0.007px;">22-0628-1655</span>
<span class="t" style="left:128.60px;top:689.00px;font-size:11px;color:#000;letter-spacing:-0.104px;width:196.1px;overflow:hidden;">220628a</span>
<span class="t" style="left:528.20px;top:689.00px;font-size:11px;color:#000;letter-spacing:0.050px;">À calculer</span>
<span class="t" style="left:728.50px;top:689.00px;font-size:11px;color:#000;letter-spacing:0.064px;width:19.8px;overflow:hidden;">Alai</span>
<div style="left:5.1px;top:704px;width:19.6px;height:1.1px;background:#8a8a8a;"></div>
<div style="left:26px;top:704.2px;width:722.5px;height:1px;background:#f0f0f0;"></div>
<span class="t" style="left:28.60px;top:709.00px;font-size:11px;color:#000;letter-spacing:0.007px;">22-0627-0844</span>
<span class="t" style="left:128.60px;top:709.00px;font-size:11px;color:#000;letter-spacing:0.014px;width:196.1px;overflow:hidden;">220627</span>
<span class="t" style="left:528.20px;top:709.00px;font-size:11px;color:#000;letter-spacing:0.050px;">À calculer</span>
<span class="t" style="left:728.50px;top:709.00px;font-size:11px;color:#000;letter-spacing:0.064px;width:19.8px;overflow:hidden;">Alai</span>
<div style="left:5.1px;top:724px;width:19.6px;height:1.1px;background:#8a8a8a;"></div>
<div style="left:26px;top:724.2px;width:722.5px;height:1px;background:#f0f0f0;"></div>
<span class="t" style="left:28.60px;top:729.00px;font-size:11px;color:#000;letter-spacing:0.007px;">22-0623-0959</span>
<span class="t" style="left:129.10px;top:729.00px;font-size:11px;color:#000;letter-spacing:-0.350px;width:195.6px;overflow:hidden;">P220616</span>
<span class="t" style="left:528.20px;top:729.00px;font-size:11px;color:#000;letter-spacing:0.050px;">À calculer</span>
<span class="t" style="left:729.10px;top:729.00px;font-size:11px;color:#000;letter-spacing:0.059px;width:19.2px;overflow:hidden;">Pier</span>
<div style="left:5.1px;top:744px;width:19.6px;height:1.1px;background:#8a8a8a;"></div>
<div style="left:26px;top:744.2px;width:722.5px;height:1px;background:#f0f0f0;"></div>
<span class="t" style="left:28.60px;top:749.00px;font-size:11px;color:#000;letter-spacing:0.007px;">22-0623-0955</span>
<span class="t" style="left:128.60px;top:749.00px;font-size:11px;color:#000;letter-spacing:-0.323px;width:196.1px;overflow:hidden;">220616azzzzzzzzzzzz</span>
<span class="t" style="left:528.20px;top:749.00px;font-size:11px;color:#000;letter-spacing:0.050px;">À calculer</span>
<span class="t" style="left:729.10px;top:749.00px;font-size:11px;color:#000;letter-spacing:0.059px;width:19.2px;overflow:hidden;">Pier</span>
<div style="left:5.1px;top:764px;width:19.6px;height:1.1px;background:#8a8a8a;"></div>
<div style="left:26px;top:764.2px;width:722.5px;height:1px;background:#f0f0f0;"></div>
<span class="t" style="left:28.60px;top:769.00px;font-size:11px;color:#000;letter-spacing:0.007px;">22-0623-0001</span>
<span class="t" style="left:129.10px;top:769.00px;font-size:11px;color:#000;letter-spacing:0.281px;width:195.6px;overflow:hidden;">Test Alain</span>
<span class="t" style="left:528.20px;top:769.00px;font-size:11px;color:#000;letter-spacing:0.050px;">À calculer</span>
<span class="t" style="left:728.50px;top:769.00px;font-size:11px;color:#000;letter-spacing:0.064px;width:19.8px;overflow:hidden;">Alai</span>
<div style="left:5.1px;top:784px;width:19.6px;height:1.1px;background:#8a8a8a;"></div>
<div style="left:26px;top:784.2px;width:722.5px;height:1px;background:#f0f0f0;"></div>
<span class="t" style="left:28.60px;top:789.00px;font-size:11px;color:#000;letter-spacing:0.007px;">22-0623-0000</span>
<span class="t" style="left:129.10px;top:789.00px;font-size:11px;color:#000;letter-spacing:0.236px;width:195.6px;overflow:hidden;">Test Alain 2</span>
<span class="t" style="left:528.20px;top:789.00px;font-size:11px;color:#000;letter-spacing:0.050px;">À calculer</span>
<span class="t" style="left:728.50px;top:789.00px;font-size:11px;color:#000;letter-spacing:0.064px;width:19.8px;overflow:hidden;">Alai</span>
<div style="left:5.1px;top:804px;width:19.6px;height:1.1px;background:#8a8a8a;"></div>
<div style="left:26px;top:804.2px;width:722.5px;height:1px;background:#f0f0f0;"></div>
<span class="t" style="left:28.60px;top:809.00px;font-size:11px;color:#000;letter-spacing:0.056px;">22-0621-1116TT</span>
<span class="t" style="left:128.60px;top:809.00px;font-size:11px;color:#000;letter-spacing:-0.170px;width:196.1px;overflow:hidden;">220620TT</span>
<span class="t" style="left:528.20px;top:809.00px;font-size:11px;color:#000;letter-spacing:0.050px;">À calculer</span>
<span class="t" style="left:728.50px;top:809.00px;font-size:11px;color:#000;letter-spacing:0.064px;width:19.8px;overflow:hidden;">Alai</span>
<div style="left:5.1px;top:824px;width:19.6px;height:1.1px;background:#8a8a8a;"></div>
<div style="left:26px;top:824.2px;width:722.5px;height:1px;background:#f0f0f0;"></div>
<span class="t" style="left:28.60px;top:829.00px;font-size:11px;color:#000;letter-spacing:0.076px;">22-0621-1103</span>
<span class="t" style="left:129.10px;top:829.00px;font-size:11px;color:#000;letter-spacing:0.157px;width:195.6px;overflow:hidden;">Projet démo aLAIN</span>
<span class="t" style="left:528.20px;top:829.00px;font-size:11px;color:#000;letter-spacing:0.050px;">À calculer</span>
<span class="t" style="left:728.50px;top:829.00px;font-size:11px;color:#000;letter-spacing:0.064px;width:19.8px;overflow:hidden;">Alai</span>
<div style="left:5.1px;top:844px;width:19.6px;height:1.1px;background:#8a8a8a;"></div>
<div style="left:26px;top:844.2px;width:722.5px;height:1px;background:#f0f0f0;"></div>
<span class="t" style="left:28.60px;top:849.00px;font-size:11px;color:#000;letter-spacing:0.007px;">22-0621-1005</span>
<span class="t" style="left:129.10px;top:849.00px;font-size:11px;color:#000;letter-spacing:0.199px;width:195.6px;overflow:hidden;">Projet démo</span>
<span class="t" style="left:528.20px;top:849.00px;font-size:11px;color:#000;letter-spacing:0.050px;">À calculer</span>
<span class="t" style="left:729.10px;top:849.00px;font-size:11px;color:#000;letter-spacing:0.059px;width:19.2px;overflow:hidden;">Pier</span>
<div style="left:5.1px;top:864px;width:19.6px;height:1.1px;background:#8a8a8a;"></div>
<div style="left:26px;top:864.2px;width:722.5px;height:1px;background:#f0f0f0;"></div>
<span class="t" style="left:28.60px;top:869.00px;font-size:11px;color:#000;letter-spacing:0.007px;">22-0621-1001</span>
<span class="t" style="left:128.60px;top:869.00px;font-size:11px;color:#000;letter-spacing:-0.099px;width:196.1px;overflow:hidden;">220620 a</span>
<span class="t" style="left:528.20px;top:869.00px;font-size:11px;color:#000;letter-spacing:0.050px;">À calculer</span>
<span class="t" style="left:728.50px;top:869.00px;font-size:11px;color:#000;letter-spacing:0.064px;width:19.8px;overflow:hidden;">Alai</span>
<div style="left:5.1px;top:884px;width:19.6px;height:1.1px;background:#8a8a8a;"></div>
<div style="left:26px;top:884.2px;width:722.5px;height:1px;background:#f0f0f0;"></div>
<span class="t" style="left:28.60px;top:889.00px;font-size:11px;color:#000;letter-spacing:0.007px;">22-0620-1322</span>
<span class="t" style="left:128.60px;top:889.00px;font-size:11px;color:#000;letter-spacing:0.216px;width:196.1px;overflow:hidden;">220620test</span>
<span class="t" style="left:528.20px;top:889.00px;font-size:11px;color:#000;letter-spacing:0.050px;">À calculer</span>
<span class="t" style="left:728.50px;top:889.00px;font-size:11px;color:#000;letter-spacing:0.064px;width:19.8px;overflow:hidden;">Alai</span>
<div style="left:5.1px;top:904px;width:19.6px;height:1.1px;background:#8a8a8a;"></div>
<div style="left:26px;top:904.2px;width:722.5px;height:1px;background:#f0f0f0;"></div>
<span class="t" style="left:28.60px;top:909.00px;font-size:11px;color:#000;letter-spacing:0.007px;">22-0620-1307</span>
<span class="t" style="left:128.60px;top:909.00px;font-size:11px;color:#000;letter-spacing:-0.104px;width:196.1px;overflow:hidden;">220620a</span>
<span class="t" style="left:528.20px;top:909.00px;font-size:11px;color:#000;letter-spacing:0.050px;">À calculer</span>
<span class="t" style="left:728.50px;top:909.00px;font-size:11px;color:#000;letter-spacing:0.064px;width:19.8px;overflow:hidden;">Alai</span>
<div style="left:5.1px;top:924px;width:19.6px;height:1.1px;background:#8a8a8a;"></div>
<div style="left:26px;top:924.2px;width:722.5px;height:1px;background:#f0f0f0;"></div>
<span class="t" style="left:28.60px;top:929.00px;font-size:11px;color:#000;letter-spacing:0.007px;">22-0620-1306</span>
<span class="t" style="left:128.60px;top:929.00px;font-size:11px;color:#000;letter-spacing:-0.070px;width:196.1px;overflow:hidden;">220620</span>
<span class="t" style="left:528.20px;top:929.00px;font-size:11px;color:#000;letter-spacing:0.050px;">À calculer</span>
<span class="t" style="left:728.50px;top:929.00px;font-size:11px;color:#000;letter-spacing:0.064px;width:19.8px;overflow:hidden;">Alai</span>
<div style="left:5.1px;top:944px;width:19.6px;height:1.1px;background:#8a8a8a;"></div>
<div style="left:26px;top:944.2px;width:722.5px;height:1px;background:#f0f0f0;"></div>
<span class="t" style="left:28.60px;top:949.00px;font-size:11px;color:#000;letter-spacing:0.007px;">22-0617-1432</span>
<span class="t" style="left:128.60px;top:949.00px;font-size:11px;color:#000;letter-spacing:0.014px;width:196.1px;overflow:hidden;">220617</span>
<span class="t" style="left:528.20px;top:949.00px;font-size:11px;color:#000;letter-spacing:0.050px;">À calculer</span>
<span class="t" style="left:728.50px;top:949.00px;font-size:11px;color:#000;letter-spacing:0.064px;width:19.8px;overflow:hidden;">Alai</span>
<div style="left:5.1px;top:964px;width:19.6px;height:1.1px;background:#8a8a8a;"></div>
<div style="left:26px;top:964.2px;width:722.5px;height:1px;background:#f0f0f0;"></div>
<div style="left:531.2px;top:967.5px;width:2.4px;height:1.2px;background:#555;transform:skewX(42deg);"></div>
<div style="left:748.4px;top:283.6px;width:17px;height:685.4px;background:#f0f0f0;"></div>
<div style="left:749.4px;top:302.6px;width:13.6px;height:666.4px;background:#cdcdcd;"></div>
<svg style="left:752.5px;top:290.2px" width="9" height="6" viewBox="0 0 9 6"><path d="M0.7,5.2 L4.5,1.3 L8.3,5.2" fill="none" stroke="#555" stroke-width="1.5"/></svg>
<div style="left:748.4px;top:283.6px;width:0.8px;height:19px;background:#fff;"></div>
<div style="left:764px;top:283.6px;width:1.6px;height:686px;background:#868686;"></div>
<div style="left:768.6px;top:195.2px;width:3.2px;height:774px;background:#90aed3;"></div>
<div style="left:778.4px;top:285px;width:1.4px;height:684px;background:#858585;"></div>
<span class="t" style="left:782.00px;top:201.00px;font-size:11.5px;color:#36414c;letter-spacing:0.249px;">No. du projet</span>
<span class="t" style="left:892.40px;top:201.00px;font-size:11.5px;color:#36414c;letter-spacing:0.190px;">Nom du projet</span>
<div style="left:780.7px;top:215px;width:102.8px;height:20px;background:#fff;box-sizing:border-box;border:1px solid;border-color:#9a9a9a #fff #fff #9a9a9a;"></div>
<div style="left:890.5px;top:215px;width:1027.5px;height:20px;background:#fff;box-sizing:border-box;border:1px solid;border-color:#9a9a9a #fff #fff #9a9a9a;"></div>
<span class="t" style="left:783.10px;top:220.00px;font-size:12.5px;color:#1b2530;font-weight:bold;letter-spacing:-0.038px;">X22-026</span>
<span class="t" style="left:893.40px;top:220.00px;font-size:12.5px;color:#1b2530;font-weight:bold;letter-spacing:-0.642px;">Pierre Tanguay | Maison neuve 2 étages</span>
<span class="t" style="left:782.00px;top:241.00px;font-size:11.5px;color:#36414c;letter-spacing:0.068px;">Nom du client</span>
<div style="left:780.7px;top:254.4px;width:1137.4px;height:18.4px;background:#fff;box-sizing:border-box;border:1px solid #a9adb3;border-right:none;"></div>
<div style="left:779px;top:285px;width:1139px;height:1.3px;background:#4a4a4a;"></div>
<div style="left:779.6px;top:287.7px;width:75.8px;height:21px;background:#000;"></div>
<span class="t" style="left:790.30px;top:294.00px;font-size:11px;color:#fff;letter-spacing:-0.356px;">Soumission</span>
<span class="t" style="left:864.40px;top:294.00px;font-size:11px;color:#141c26;letter-spacing:-0.075px;">Clients</span>
<span class="t" style="left:918.30px;top:294.00px;font-size:11px;color:#141c26;letter-spacing:0.258px;">Projet</span>
<span class="t" style="left:969.40px;top:294.00px;font-size:11px;color:#141c26;letter-spacing:-0.057px;">Images / Fichiers attachés</span>
<span class="t" style="left:1116.70px;top:294.00px;font-size:11px;color:#141c26;letter-spacing:0.170px;">Notes</span>
<span class="t" style="left:1167.10px;top:294.00px;font-size:11px;color:#141c26;letter-spacing:-0.240px;">Calculs</span>
<span class="t" style="left:1222.40px;top:294.00px;font-size:11px;color:#141c26;letter-spacing:-0.181px;">Compilation</span>
<div style="left:786px;top:320.3px;width:834px;height:146.5px;box-sizing:border-box;border:1px solid #b9b9b9;"></div>
<div style="left:792.6px;top:319.3px;width:57.8px;height:3px;background:#fff;"></div>
<span class="t" style="left:794.60px;top:316.00px;font-size:11px;color:#1a222c;letter-spacing:-0.406px;">Soumission</span>
<span class="t" style="left:793.40px;top:333.00px;font-size:11.5px;color:#36414c;letter-spacing:0.141px;">Type</span>
<span class="t" style="left:793.40px;top:359.00px;font-size:11.5px;color:#36414c;letter-spacing:0.231px;">No.</span>
<span class="t" style="left:793.40px;top:385.00px;font-size:11.5px;color:#36414c;letter-spacing:0.006px;">Nom</span>
<div style="left:905.4px;top:331.2px;width:185.8px;height:18.6px;background:#f0f0f0;box-sizing:border-box;border:1px solid #a9adb3;"></div>
<div style="left:1075px;top:332.2px;width:15.2px;height:16.6px;background:#fafafa;"></div>
<svg style="left:1080px;top:339.2px" width="7" height="4" viewBox="0 0 7 4"><path d="M0.3,0.3 L6.3,0.3 L3.3,3.4z" fill="#9a9a9a"/></svg>
<span class="t" style="left:907.50px;top:335.00px;font-size:11px;color:#000;letter-spacing:-0.406px;">Soumission</span>
<div style="left:1097.2px;top:331.2px;width:97.8px;height:18.6px;background:#f0f0f0;box-sizing:border-box;border:1px solid #a9adb3;"></div>
<div style="left:905.4px;top:358.5px;width:289.6px;height:18.4px;background:#f0f0f0;box-sizing:border-box;border:1px solid #a9adb3;"></div>
<span class="t" style="left:906.40px;top:362.00px;font-size:11px;color:#000;letter-spacing:-0.099px;">X22-026</span>
<span class="t" style="left:1219.20px;top:335.00px;font-size:11.5px;color:#36414c;letter-spacing:-0.265px;">Code Succursale</span>
<span class="t" style="left:1219.20px;top:362.00px;font-size:11.5px;color:#36414c;letter-spacing:-0.271px;">Créée le</span>
<div style="left:1321.8px;top:331.2px;width:290.1px;height:18.6px;background:#f0f0f0;box-sizing:border-box;border:1px solid #a9adb3;"></div>
<div style="left:1321.8px;top:360.2px;width:290.1px;height:18.5px;background:#f0f0f0;box-sizing:border-box;border:1px solid #a9adb3;"></div>
<span class="t" style="left:1323.20px;top:364.00px;font-size:11px;color:#000;letter-spacing:-0.008px;">Mon 4 Apr 2022 21:23</span>
<div style="left:905.4px;top:386.4px;width:709.6px;height:73.4px;background:#f0f0f0;box-sizing:border-box;border:1px solid #a9adb3;"></div>
<div style="left:1597px;top:387.4px;width:1px;height:71.4px;background:#f8f8f8;"></div>
<svg style="left:1601.5px;top:393.4px" width="9" height="6" viewBox="0 0 9 6"><path d="M0.8,5 L4.5,1.2 L8.2,5" fill="none" stroke="#b9b9b9" stroke-width="1.3"/></svg>
<svg style="left:1601.5px;top:447.3px" width="9" height="6" viewBox="0 0 9 6"><path d="M0.8,1 L4.5,4.8 L8.2,1" fill="none" stroke="#b9b9b9" stroke-width="1.3"/></svg>
<span class="t" style="left:906.40px;top:389.00px;font-size:11px;color:#000;letter-spacing:-0.040px;">Pierre Tanguay | Maison neuve 2 étages</span>
<div style="left:786px;top:482.4px;width:831.8px;height:131.2px;box-sizing:border-box;border:1px solid #b9b9b9;"></div>
<div style="left:792.6px;top:481.4px;width:105.7px;height:3px;background:#fff;"></div>
<span class="t" style="left:794.60px;top:478.00px;font-size:11px;color:#1a222c;letter-spacing:-0.184px;">État de la soumission</span>
<span class="t" style="left:793.40px;top:503.00px;font-size:11.5px;color:#36414c;letter-spacing:-0.017px;">État</span>
<div style="left:903.4px;top:501.2px;width:289.8px;height:18.5px;background:#f0f0f0;box-sizing:border-box;border:1px solid #a9adb3;"></div>
<div style="left:1177px;top:502.2px;width:15.2px;height:16.5px;background:#fafafa;"></div>
<svg style="left:1182px;top:509.2px" width="7" height="4" viewBox="0 0 7 4"><path d="M0.3,0.3 L6.3,0.3 L3.3,3.4z" fill="#9a9a9a"/></svg>
<span class="t" style="left:904.60px;top:505.00px;font-size:11px;color:#000;letter-spacing:0.010px;">À calculer</span>
<span class="t" style="left:793.40px;top:531.00px;font-size:11.5px;color:#36414c;letter-spacing:-0.029px;">Date fermeture</span>
<span class="t" style="left:793.40px;top:558.00px;font-size:11.5px;color:#36414c;letter-spacing:0.051px;">Date de visite</span>
<div style="left:903.4px;top:529.3px;width:150px;height:18.5px;background:#f0f0f0;box-sizing:border-box;border:1px solid #a9adb3;"></div>
<div style="left:1034.5px;top:530.3px;width:17.9px;height:16.5px;background:#e6e6e6;"></div>
<svg style="left:1040.2px;top:537.3px" width="7" height="4" viewBox="0 0 7 4"><path d="M0.3,0.3 L6.3,0.3 L3.3,3.4z" fill="#9a9a9a"/></svg>
<div style="left:1121.2px;top:529.3px;width:72px;height:18.5px;background:#f0f0f0;box-sizing:border-box;border:1px solid #a9adb3;"></div>
<div style="left:903.4px;top:556.3px;width:150px;height:18.5px;background:#f0f0f0;box-sizing:border-box;border:1px solid #a9adb3;"></div>
<div style="left:1034.5px;top:557.3px;width:17.9px;height:16.5px;background:#e6e6e6;"></div>
<svg style="left:1040.2px;top:564.3px" width="7" height="4" viewBox="0 0 7 4"><path d="M0.3,0.3 L6.3,0.3 L3.3,3.4z" fill="#9a9a9a"/></svg>
<div style="left:1121.2px;top:556.3px;width:72px;height:18.5px;background:#f0f0f0;box-sizing:border-box;border:1px solid #a9adb3;"></div>
<span class="t" style="left:1070.70px;top:531.00px;font-size:11.5px;color:#36414c;letter-spacing:-0.046px;">Heure</span>
<span class="t" style="left:1070.70px;top:558.00px;font-size:11.5px;color:#36414c;letter-spacing:-0.046px;">Heure</span>
<span class="t" style="left:793.40px;top:589.00px;font-size:11px;color:#0000ee;letter-spacing:0.068px;text-decoration:underline;">Source du projet</span>
<div style="left:903.4px;top:587.3px;width:289.8px;height:18.5px;background:#f0f0f0;box-sizing:border-box;border:1px solid #a9adb3;"></div>
<div style="left:1177px;top:588.3px;width:15.2px;height:16.5px;background:#fafafa;"></div>
<svg style="left:1182px;top:595.2px" width="7" height="4" viewBox="0 0 7 4"><path d="M0.3,0.3 L6.3,0.3 L3.3,3.4z" fill="#9a9a9a"/></svg>
<div style="left:1225.5px;top:501.3px;width:387.7px;height:50.4px;background:#f0f0f0;box-sizing:border-box;border:1px solid #a9adb3;"></div>
<div style="left:1595.2px;top:502.3px;width:1px;height:48.4px;background:#f8f8f8;"></div>
<svg style="left:1599.7px;top:508.3px" width="9" height="6" viewBox="0 0 9 6"><path d="M0.8,5 L4.5,1.2 L8.2,5" fill="none" stroke="#b9b9b9" stroke-width="1.3"/></svg>
<svg style="left:1599.7px;top:539.2px" width="9" height="6" viewBox="0 0 9 6"><path d="M0.8,1 L4.5,4.8 L8.2,1" fill="none" stroke="#b9b9b9" stroke-width="1.3"/></svg>
<div style="left:786px;top:628.2px;width:426.6px;height:158.2px;box-sizing:border-box;border:1px solid #b9b9b9;"></div>
<div style="left:792.3px;top:627.2px;width:67.65px;height:3px;background:#fff;"></div>
<span class="t" style="left:794.30px;top:623.00px;font-size:11px;color:#1a222c;letter-spacing:-0.189px;">Responsable</span>
<span class="t" style="left:793.50px;top:642.00px;font-size:11.5px;color:#36414c;letter-spacing:-0.028px;">Compagnie</span>
<span class="t" style="left:793.50px;top:668.00px;font-size:11.5px;color:#36414c;letter-spacing:-0.106px;">Estimateur</span>
<span class="t" style="left:793.40px;top:695.00px;font-size:11px;color:#0000ee;letter-spacing:0.145px;text-decoration:underline;">Suivi du suivi</span>
<span class="t" style="left:793.40px;top:730.00px;font-size:11px;color:#0000ee;letter-spacing:-0.072px;text-decoration:underline;">Avertissement</span>
<span class="t" style="left:793.50px;top:755.00px;font-size:11.5px;color:#36414c;letter-spacing:-0.589px;">Vendu par</span>
<div style="left:785.8px;top:801px;width:427px;height:112.7px;box-sizing:border-box;border:1px solid #b9b9b9;"></div>
<div style="left:792.3px;top:800px;width:45.7px;height:3px;background:#fff;"></div>
<span class="t" style="left:794.30px;top:796.00px;font-size:11px;color:#1a222c;letter-spacing:-0.186px;">Révision</span>
<span class="t" style="left:793.30px;top:822.00px;font-size:11.5px;color:#36414c;letter-spacing:-0.035px;">Notes sur la révision No.</span>
<div style="left:920.7px;top:816.1px;width:59.4px;height:19.3px;background:#fff;box-sizing:border-box;border:1px solid;border-color:#7d7d7d #f4f4f4 #f4f4f4 #7d7d7d;box-shadow:inset 1px 1px 0 #8e8e8e;"></div>
<div style="left:963.4px;top:818.1px;width:15.7px;height:16.6px;background:#ececec;box-sizing:border-box;border:1px solid;border-color:#fdfdfd #868686 #868686 #fdfdfd;"></div>
<svg style="left:966.9px;top:825.0px" width="8" height="4.2" viewBox="0 0 8 4.2"><path d="M0,0 L8,0 L4,4.1z" fill="#000"/></svg>
<span class="t" style="left:923.60px;top:822.00px;font-size:11px;color:#000;">0</span>
<svg style="left:989.1px;top:814.3px;" width="19.6" height="19" viewBox="0 0 19.6 19"><path d="M7.35,0 h4.90 v7.05 h7.35 v4.90 h-7.35 v7.05 h-4.90 v-7.05 h-7.35 v-4.90 h7.35z" fill="#0f2231" stroke="#0f2231" stroke-width="0.6" stroke-linejoin="round"/></svg>
<svg style="left:1010.4px;top:811px;" width="24.5" height="24.3" viewBox="0 0 24.5 24.3"><path d="M8.9,0.1 h7 q1.1,0 1.1,1.1 v2.3 h-1.5 v-1.9 h-6.2 v1.9 h-1.5 v-2.3 q0,-1.1 1.1,-1.1z" fill="#0f2231"/><rect x="0" y="3.4" width="24.5" height="2.8" rx="1.2" fill="#0f2231"/><path d="M1.7,8 h20.9 v14 q0,2.3 -2.3,2.3 h-16.3 q-2.3,0 -2.3,-2.3z" fill="#0f2231"/><path d="M6.6,10.8 v10.1 M10.3,10.8 v10.1 M14.2,10.8 v10.1 M18,10.8 v10.1" stroke="#fff" stroke-width="1.55" opacity=".85"/></svg>
<div style="left:791.7px;top:844.2px;width:403.9px;height:51.5px;background:#f0f0f0;box-sizing:border-box;border:1px solid #a9adb3;"></div>
<div style="left:1177.6px;top:845.2px;width:1px;height:49.5px;background:#f8f8f8;"></div>
<svg style="left:1182.1px;top:851.2px" width="9" height="6" viewBox="0 0 9 6"><path d="M0.8,5 L4.5,1.2 L8.2,5" fill="none" stroke="#b9b9b9" stroke-width="1.3"/></svg>
<svg style="left:1182.1px;top:883.2px" width="9" height="6" viewBox="0 0 9 6"><path d="M0.8,1 L4.5,4.8 L8.2,1" fill="none" stroke="#b9b9b9" stroke-width="1.3"/></svg>
<div style="left:1219.4px;top:801px;width:400.4px;height:112.7px;box-sizing:border-box;border:1px solid #b9b9b9;"></div>
<div style="left:1225.5px;top:800px;width:48px;height:3px;background:#fff;"></div>
<span class="t" style="left:1227.50px;top:796.00px;font-size:11px;color:#1a222c;letter-spacing:-0.053px;">Scénario</span>
<span class="t" style="left:1226.90px;top:823.00px;font-size:11.5px;color:#36414c;letter-spacing:-0.065px;">Notes sur le scénario No.</span>
<div style="left:1355.4px;top:817.3px;width:54.3px;height:19px;background:#fff;box-sizing:border-box;border:1px solid;border-color:#7d7d7d #f4f4f4 #f4f4f4 #7d7d7d;box-shadow:inset 1px 1px 0 #8e8e8e;"></div>
<div style="left:1393px;top:819.3px;width:15.7px;height:16.3px;background:#ececec;box-sizing:border-box;border:1px solid;border-color:#fdfdfd #868686 #868686 #fdfdfd;"></div>
<svg style="left:1396.5px;top:826.2px" width="8" height="4.2" viewBox="0 0 8 4.2"><path d="M0,0 L8,0 L4,4.1z" fill="#000"/></svg>
<span class="t" style="left:1359.70px;top:823.00px;font-size:11px;color:#000;">1</span>
<svg style="left:1419.9px;top:815.4px;" width="18.9" height="19.2" viewBox="0 0 18.9 19.2"><path d="M7.09,0 h4.72 v7.24 h7.09 v4.72 h-7.09 v7.24 h-4.72 v-7.24 h-7.09 v-4.72 h7.09z" fill="#0f2231" stroke="#0f2231" stroke-width="0.6" stroke-linejoin="round"/></svg>
<svg style="left:1441.5px;top:812.7px;" width="23.4" height="23.4" viewBox="0 0 24.5 24.3"><path d="M8.9,0.1 h7 q1.1,0 1.1,1.1 v2.3 h-1.5 v-1.9 h-6.2 v1.9 h-1.5 v-2.3 q0,-1.1 1.1,-1.1z" fill="#0f2231"/><rect x="0" y="3.4" width="24.5" height="2.8" rx="1.2" fill="#0f2231"/><path d="M1.7,8 h20.9 v14 q0,2.3 -2.3,2.3 h-16.3 q-2.3,0 -2.3,-2.3z" fill="#0f2231"/><path d="M6.6,10.8 v10.1 M10.3,10.8 v10.1 M14.2,10.8 v10.1 M18,10.8 v10.1" stroke="#fff" stroke-width="1.55" opacity=".85"/></svg>
<div style="left:1225.5px;top:844.2px;width:383.4px;height:51.5px;background:#f0f0f0;box-sizing:border-box;border:1px solid #a9adb3;"></div>
<div style="left:1590.9px;top:845.2px;width:1px;height:49.5px;background:#f8f8f8;"></div>
<svg style="left:1595.4px;top:851.2px" width="9" height="6" viewBox="0 0 9 6"><path d="M0.8,5 L4.5,1.2 L8.2,5" fill="none" stroke="#b9b9b9" stroke-width="1.3"/></svg>
<svg style="left:1595.4px;top:883.2px" width="9" height="6" viewBox="0 0 9 6"><path d="M0.8,1 L4.5,4.8 L8.2,1" fill="none" stroke="#b9b9b9" stroke-width="1.3"/></svg>
<div style="left:838.3px;top:599.5px;width:887.7px;height:209.1px;background:#f0f0f0;"></div>
<div style="left:838.3px;top:599.5px;width:887.7px;height:1.2px;background:#2a2f36;"></div>
<div style="left:838.3px;top:599.5px;width:1.2px;height:42.5px;background:#3a3f46;"></div>
<div style="left:838.3px;top:642px;width:1px;height:166.6px;background:#b4b4b4;"></div>
<div style="left:1724.7px;top:599.5px;width:1.3px;height:42.5px;background:#2a2f36;"></div>
<div style="left:1724.9px;top:642px;width:1px;height:166.6px;background:#a8a8a8;"></div>
<div style="left:838.3px;top:807.6px;width:887.7px;height:1px;background:#a6a6a6;"></div>
<span class="t" style="left:848.80px;top:614.00px;font-size:14.5px;color:#a0a0a0;letter-spacing:-0.199px;">Importation des marqueurs</span>
<div style="left:943.6px;top:715px;width:675.7px;height:2.2px;background:#0072c6;"></div>
<div style="left:928.2px;top:700.6px;width:30.8px;height:30.8px;background:#0072c6;border-radius:50%;"></div>
<div style="left:1097.1px;top:700.6px;width:30.8px;height:30.8px;background:#0072c6;border-radius:50%;"></div>
<div style="left:1266px;top:700.6px;width:30.8px;height:30.8px;background:#0072c6;border-radius:50%;"></div>
<div style="left:1434.9px;top:700.6px;width:30.8px;height:30.8px;background:#0072c6;border-radius:50%;"></div>
<div style="left:1603.9px;top:700.6px;width:30.8px;height:30.8px;background:#0072c6;border-radius:50%;"></div>
<span class="t" style="left:887.00px;top:740.00px;font-size:14.5px;color:#333;letter-spacing:-0.143px;">Création du projet</span>
<span class="t" style="left:1051.80px;top:740.00px;font-size:14.5px;color:#333;letter-spacing:-0.266px;">Insertion du modèle</span>
<span class="t" style="left:1216.90px;top:740.00px;font-size:14.5px;color:#333;letter-spacing:-0.420px;">Duplication des items</span>
<span class="t" style="left:1382.10px;top:740.00px;font-size:14.5px;color:#333;letter-spacing:-0.329px;">Inscription des valeurs</span>
<span class="t" style="left:1550.80px;top:740.00px;font-size:14.5px;color:#333;letter-spacing:-0.658px;">Calcul de la soumission</span>
<div style="left:853.7px;top:772px;width:855.9px;height:17.8px;background:#fff;box-sizing:border-box;border:1px solid #bcbcbc;"></div>
<div style="left:855.6px;top:773.9px;width:852.1px;height:14px;background:#0072c6;"></div>
<span class="t" style="left:1266.50px;top:776.00px;font-size:11px;color:#fff;letter-spacing:-0.121px;">100 %</span>
<svg style="left:1716.5px;top:799.3px;" width="8" height="8" viewBox="0 0 8 8"><rect x="6" y="0" width="1.6" height="1.6" fill="#555"/><rect x="3" y="3" width="1.6" height="1.6" fill="#555"/><rect x="6" y="3" width="1.6" height="1.6" fill="#555"/><rect x="0" y="6" width="1.6" height="1.6" fill="#555"/><rect x="3" y="6" width="1.6" height="1.6" fill="#555"/><rect x="6" y="6" width="1.6" height="1.6" fill="#555"/></svg>
<div style="left:1214.5px;top:436px;width:303.7px;height:158.8px;background:#f0f0f0;box-sizing:border-box;border:1px solid #1a83d8;box-shadow:0 1px 7px rgba(0,0,0,.2);"></div>
<div style="left:1214.5px;top:436px;width:303.7px;height:43px;background:#222a35;"></div>
<span class="t" style="left:1226.00px;top:451.00px;font-size:14.5px;color:#fff;letter-spacing:-1.005px;">ESTIMATION</span>
<svg style="left:1489px;top:452px" width="11" height="10" viewBox="0 0 11 10"><path d="M0.4,0.2 L10.2,9.8 M10.2,0.2 L0.4,9.8" stroke="#8f959c" stroke-width="1.1" fill="none"/></svg>
<div style="left:1248.5px;top:500.2px;width:29.6px;height:29.6px;background:#0078d7;border-radius:50%;"></div>
<div style="left:1262.3px;top:505.6px;width:2.1px;height:2.3px;background:#fff;"></div>
<div style="left:1262.3px;top:510.2px;width:2.1px;height:13.6px;background:#fff;"></div>
<span class="t" style="left:1288.30px;top:504.00px;font-size:11px;color:#1e2a38;letter-spacing:0.059px;">Importation terminé.</span>
<span class="t" style="left:1288.30px;top:517.00px;font-size:11px;color:#1e2a38;letter-spacing:-0.036px;">Le nombre de relevé importé est de : 5/5</span>
<div style="left:1328.2px;top:559.2px;width:75px;height:22.8px;background:#efefef;box-sizing:border-box;border:1px solid #202020;"></div>
<div style="left:1330.3px;top:561.3px;width:70.8px;height:18.6px;box-sizing:border-box;border:1px dotted #222;"></div>
<span class="t" style="left:1357.30px;top:566.00px;font-size:11px;color:#111;letter-spacing:-0.353px;">OK</span>
</body></html>
